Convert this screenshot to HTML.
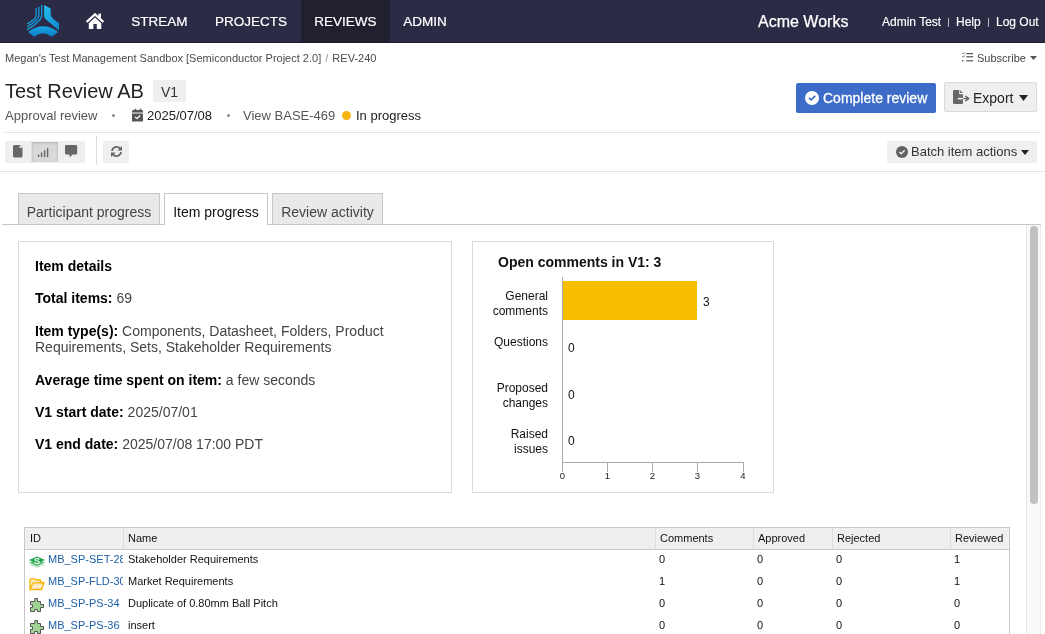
<!DOCTYPE html>
<html><head><meta charset="utf-8">
<style>
*{box-sizing:border-box;margin:0;padding:0}
html{will-change:transform}
html,body{width:1045px;height:634px;overflow:hidden;background:#fff;font-family:"Liberation Sans",sans-serif;color:#222}
.abs{position:absolute;white-space:nowrap}
svg{position:absolute;overflow:visible}
#hdr{position:absolute;left:0;top:0;width:1045px;height:43px;background:#2c2b45;border-bottom:1px solid #1c1b30}
.nav{position:absolute;top:0;height:42px;color:#fff;font-size:13.5px;-webkit-text-stroke:0.2px #fff}
.nav span{position:absolute;top:14px;left:0;right:0;text-align:center}
.act{background:#20202f}
.bc{font-size:11px;color:#4a4a4a}
.sub{font-size:13px;color:#555}
.hr{position:absolute;height:1px;background:#e4e4e4}
.btn{position:absolute;background:#efefef;border-radius:2px}
.tab{position:absolute;top:193px;height:31px;border:1px solid #c6c6c6;border-bottom:none;background:#e9e9e9;font-size:14px;color:#444}
.tab span{position:absolute;top:10px;left:0;right:0;text-align:center}
.tab.on{background:#fff;color:#111;height:32px}
.box{position:absolute;border:1px solid #dadada}
.p{position:absolute;left:35px;font-size:14px;color:#444;white-space:nowrap;line-height:16px}
.p b{color:#000}
.cl{position:absolute;font-size:12px;color:#111;text-align:right;line-height:15px;white-space:nowrap}
.zl{position:absolute;font-size:12px;color:#111}
.tk{position:absolute;font-size:9.5px;color:#222;width:10px;text-align:center}
.ax{position:absolute;background:#a9a9a9}
.td{font-size:11px;color:#111}
table{position:absolute;left:24px;top:527px;border-collapse:collapse;font-size:11px;color:#111;table-layout:fixed;width:986px}
th{background:#efefef;font-weight:normal;text-align:left;height:23px;border-top:1px solid #c8c8c8;border-bottom:1px solid #c8c8c8;border-left:1px solid #dcdcdc;padding-left:5px;padding-top:1px}
th:first-child{border-left:1px solid #c8c8c8}
th:last-child{border-right:1px solid #c8c8c8}
td{height:22px;padding-left:4px;padding-top:1px;white-space:nowrap;overflow:hidden}
td:first-child{border-left:1px solid #c8c8c8;padding-left:4px;position:relative}
td:last-child{border-right:1px solid #c8c8c8}
td a{color:#1d5fa8;text-decoration:none;margin-left:19px}
td svg{left:4px;top:4px}
</style></head><body>
<div id="hdr">
  <svg style="left:24px;top:2px" width="38" height="38" viewBox="0 0 38 38">
    <defs>
      <linearGradient id="g1" x1="0" y1="0" x2="1" y2="1"><stop offset="0" stop-color="#22c0ee"/><stop offset="1" stop-color="#0c86cf"/></linearGradient>
      <linearGradient id="g2" x1="0" y1="0" x2="0" y2="1"><stop offset="0" stop-color="#1aa6e2"/><stop offset="1" stop-color="#0a7cc7"/></linearGradient>
    </defs>
    <path d="M20.1,3 L26.7,6.4 L26.7,12.5 Q27.2,16.5 35,21 L35,28.4 L22,17.6 Q20.1,16 20.1,13.5 Z" fill="url(#g1)"/>
    <path d="M3.9,30 Q19.2,18.5 34.2,30 L27.6,34.8 Q19.2,27.5 10.2,34.8 Z" fill="url(#g2)"/>
    <g fill="none" stroke="url(#g1)" stroke-width="1.35">
      <path d="M17.7,3 L17.7,13.5 Q17.7,19 3.3,27.6"/>
      <path d="M14.9,4.8 L14.9,13.5 Q14.9,17.6 3.3,24.8"/>
      <path d="M12.1,6.3 L12.1,14 Q12.1,16.8 3.3,21.9"/>
    </g>
  </svg>
  <svg style="left:85px;top:12px" width="20" height="18" viewBox="0 0 20 18">
    <path d="M1.6,10 L10,2.3 L18.4,10" fill="none" stroke="#fff" stroke-width="2.3" stroke-linejoin="miter"/>
    <rect x="13.4" y="1.6" width="2.6" height="4" fill="#fff"/>
    <path d="M3.8,11.2 L10,5.6 L16.3,11.2 L16.3,17 L11.8,17 L11.8,12 L8.4,12 L8.4,17 L3.8,17 Z" fill="#fff"/>
  </svg>
  <div class="nav" style="left:121px;width:77px"><span>STREAM</span></div>
  <div class="nav" style="left:206px;width:90px"><span>PROJECTS</span></div>
  <div class="nav act" style="left:301px;width:89px"><span>REVIEWS</span></div>
  <div class="nav" style="left:390px;width:70px"><span>ADMIN</span></div>
  <div class="abs" style="left:758px;top:13px;font-size:16px;color:#fff;-webkit-text-stroke:0.25px #fff">Acme Works</div>
  <div class="abs" style="left:882px;top:15px;font-size:12px;color:#fff;-webkit-text-stroke:0.15px #fff">Admin Test</div>
  <div class="abs" style="left:948px;top:18px;width:1px;height:9px;background:#b9b9c4"></div>
  <div class="abs" style="left:956px;top:15px;font-size:12px;color:#fff;-webkit-text-stroke:0.15px #fff">Help</div>
  <div class="abs" style="left:988px;top:18px;width:1px;height:9px;background:#b9b9c4"></div>
  <div class="abs" style="left:996px;top:15px;font-size:12px;color:#fff;-webkit-text-stroke:0.15px #fff">Log Out</div>
</div>

<div class="abs bc" style="left:5px;top:52px">Megan's Test Management Sandbox [Semiconductor Project 2.0] <span style="color:#999;margin:0 1px">/</span> REV-240</div>
<svg style="left:962px;top:52px" width="12" height="10" viewBox="0 0 12 10">
  <path d="M0.3,1.2 L1.3,2 L3,0.3 M0.3,4.3 L1.3,5.1 L3,3.4" fill="none" stroke="#555" stroke-width="0.9"/>
  <rect x="0" y="8" width="1.4" height="1.4" fill="#555"/>
  <rect x="4.3" y="1" width="6.8" height="1.2" fill="#555"/>
  <rect x="4.3" y="4.2" width="6.8" height="1.2" fill="#555"/>
  <rect x="4.3" y="8.2" width="6.8" height="1.2" fill="#555"/>
</svg>
<div class="abs bc" style="left:977px;top:52px;color:#444">Subscribe</div>
<svg style="left:1030px;top:56px" width="7" height="4" viewBox="0 0 7 4"><path d="M0,0 L7,0 L3.5,4 Z" fill="#555"/></svg>

<div class="abs" style="left:5px;top:80px;font-size:20px;color:#222">Test Review AB</div>
<div class="abs" style="left:153px;top:80px;width:33px;height:22px;background:#efefef;border-radius:2px;font-size:14px;color:#333"><span style="position:absolute;left:0;right:0;top:4px;text-align:center">V1</span></div>

<div class="abs sub" style="left:5px;top:108px">Approval review</div>
<div class="abs" style="left:112px;top:114px;width:3px;height:3px;border-radius:50%;background:#888"></div>
<svg style="left:132px;top:108px" width="11" height="14" viewBox="0 0 11 14">
  <rect x="0" y="2" width="11" height="11.6" rx="1.2" fill="#555"/>
  <rect x="0" y="4.1" width="11" height="1.9" fill="#aaa"/>
  <rect x="2.7" y="0.7" width="1.6" height="2.5" fill="#555"/>
  <rect x="7.7" y="0.7" width="1.6" height="2.5" fill="#555"/>
  <path d="M3,9 L5,10.5 L8.2,7.6" fill="none" stroke="#fff" stroke-width="1.3"/>
</svg>
<div class="abs sub" style="left:147px;top:108px;color:#222">2025/07/08</div>
<div class="abs" style="left:227px;top:114px;width:3px;height:3px;border-radius:50%;background:#888"></div>
<div class="abs sub" style="left:243px;top:108px">View BASE-469</div>
<div class="abs" style="left:342px;top:111px;width:9px;height:9px;border-radius:50%;background:#f6b60f"></div>
<div class="abs sub" style="left:356px;top:108px;color:#222">In progress</div>

<div class="btn" style="left:796px;top:83px;width:140px;height:30px;background:#3d6cc8;border-radius:2px"></div>
<svg style="left:805px;top:91px" width="14" height="14" viewBox="0 0 14 14"><circle cx="7" cy="7" r="7" fill="#fff"/><path d="M4,6.8 L6.2,8.8 L10.2,4.8" fill="none" stroke="#3d6cc8" stroke-width="1.7"/></svg>
<div class="abs" style="left:823px;top:90px;font-size:14px;color:#fff;-webkit-text-stroke:0.3px #fff">Complete review</div>

<div class="btn" style="left:944px;top:82px;width:93px;height:30px;border:1px solid #dadada;border-radius:2px"></div>
<svg style="left:953px;top:90px" width="16" height="14" viewBox="0 0 16 14">
  <path d="M0,1.2 Q0,0 1.2,0 L6.2,0 L6.2,4.2 L10,4.2 L10,12.7 Q10,14 8.8,14 L1.2,14 Q0,14 0,12.7 Z" fill="#666"/>
  <path d="M7.2,0.2 L7.2,3.1 L10,3.1 Z" fill="#666"/>
  <rect x="4.8" y="7.8" width="5.6" height="1.6" fill="#efefef"/>
  <rect x="10.2" y="7.9" width="5" height="1.4" fill="#666"/>
  <path d="M12.4,6 L15.6,8.6 L12.4,11.1" fill="none" stroke="#666" stroke-width="1.5"/>
</svg>
<div class="abs" style="left:973px;top:90px;font-size:14px;color:#222">Export</div>
<svg style="left:1019px;top:95px" width="9" height="6" viewBox="0 0 9 6"><path d="M0,0 L9,0 L4.5,6 Z" fill="#222"/></svg>

<div class="hr" style="left:5px;top:132px;width:1036px"></div>
<div class="btn" style="left:5px;top:141px;width:80px;height:22px"></div>
<div class="abs" style="left:31px;top:141px;width:1px;height:22px;background:#e0e0e0"></div>
<div class="abs" style="left:32px;top:142px;width:26px;height:20px;background:#d9d9d9;box-shadow:inset 0 1px 3px rgba(0,0,0,.18)"></div>
<svg style="left:13px;top:145px" width="10" height="13" viewBox="0 0 10 13">
  <path d="M1.5,0 L6.8,0 L9.5,2.8 L9.5,11 Q9.5,12.5 8,12.5 L1.5,12.5 Q0,12.5 0,11 L0,1.5 Q0,0 1.5,0 Z" fill="#666"/>
  <path d="M6.6,0.3 L6.6,2.9 L9.2,2.9 Z" fill="#efefef"/>
</svg>
<svg style="left:37px;top:147px" width="12" height="11" viewBox="0 0 12 11">
  <rect x="0.9" y="7.5" width="1.4" height="2.6" rx="0.6" fill="#666"/>
  <rect x="3.9" y="5.5" width="1.4" height="4.6" fill="#666"/>
  <rect x="6.9" y="3.3" width="1.4" height="6.8" fill="#666"/>
  <rect x="9.9" y="1" width="1.4" height="9.1" fill="#666"/>
</svg>
<svg style="left:65px;top:145px" width="13" height="13" viewBox="0 0 13 13">
  <path d="M1.3,0 L11,0 Q12.2,0 12.2,1.3 L12.2,8.3 Q12.2,9.6 11,9.6 L7.5,9.6 L4.6,12.4 L4.6,9.6 L1.3,9.6 Q0,9.6 0,8.3 L0,1.3 Q0,0 1.3,0 Z" fill="#666"/>
</svg>
<div class="abs" style="left:96px;top:136px;width:1px;height:29px;background:#dcdcdc"></div>
<div class="btn" style="left:103px;top:141px;width:26px;height:22px"></div>
<svg style="left:110px;top:145px" width="13" height="13" viewBox="0 0 13 13">
  <path d="M2,6 A4.6,4.6 0 0 1 10.1,3.6" fill="none" stroke="#666" stroke-width="1.8"/>
  <path d="M12,1 L12,5.6 L7.4,5.6 Z" fill="#666"/>
  <path d="M11,7 A4.6,4.6 0 0 1 2.9,9.4" fill="none" stroke="#666" stroke-width="1.8"/>
  <path d="M1,12 L1,7.4 L5.6,7.4 Z" fill="#666"/>
</svg>

<div class="btn" style="left:887px;top:141px;width:150px;height:22px"></div>
<svg style="left:896px;top:146px" width="12" height="12" viewBox="0 0 12 12"><circle cx="6" cy="6" r="6" fill="#606060"/><path d="M3.3,6 L5.2,7.8 L8.7,4.3" fill="none" stroke="#efefef" stroke-width="1.4"/></svg>
<div class="abs" style="left:911px;top:144px;font-size:13px;color:#333">Batch item actions</div>
<svg style="left:1020.5px;top:150px" width="8" height="5" viewBox="0 0 8 5"><path d="M0,0 L8,0 L4,5 Z" fill="#222"/></svg>
<div class="hr" style="left:0;top:171px;width:1045px"></div>

<div class="abs" style="left:2px;top:224px;width:1039px;height:1px;background:#c6c6c6"></div>
<div class="tab" style="left:18px;width:142px"><span>Participant progress</span></div>
<div class="tab on" style="left:164px;width:104px"><span>Item progress</span></div>
<div class="tab" style="left:272px;width:111px"><span>Review activity</span></div>

<div class="box" style="left:18px;top:241px;width:434px;height:252px"></div>
<div class="p" style="top:258px"><b>Item details</b></div>
<div class="p" style="top:290px"><b>Total items:</b> 69</div>
<div class="p" style="top:323px"><b>Item type(s):</b> Components, Datasheet, Folders, Product<br>Requirements, Sets, Stakeholder Requirements</div>
<div class="p" style="top:372px"><b>Average time spent on item:</b> a few seconds</div>
<div class="p" style="top:404px"><b>V1 start date:</b> 2025/07/01</div>
<div class="p" style="top:436px"><b>V1 end date:</b> 2025/07/08 17:00 PDT</div>

<div class="box" style="left:472px;top:241px;width:302px;height:252px"></div>
<div class="abs" style="left:498px;top:254px;font-size:14px;font-weight:bold;color:#111">Open comments in V1: 3</div>

<div class="ax" style="left:562px;top:277px;width:1px;height:186px"></div>
<div class="ax" style="left:562px;top:462px;width:182px;height:1px"></div>
<div class="ax" style="left:562px;top:462px;width:1px;height:10px"></div>
<div class="ax" style="left:607px;top:462px;width:1px;height:10px"></div>
<div class="ax" style="left:652px;top:462px;width:1px;height:10px"></div>
<div class="ax" style="left:697px;top:462px;width:1px;height:10px"></div>
<div class="ax" style="left:743px;top:462px;width:1px;height:10px"></div>
<div class="tk" style="left:557.5px;top:470px">0</div>
<div class="tk" style="left:602.5px;top:470px">1</div>
<div class="tk" style="left:647.5px;top:470px">2</div>
<div class="tk" style="left:692.5px;top:470px">3</div>
<div class="tk" style="left:738px;top:470px">4</div>
<div class="abs" style="left:563px;top:281px;width:134px;height:39px;background:#f8be00"></div>
<div class="zl" style="left:703px;top:295px">3</div>
<div class="zl" style="left:568px;top:341px">0</div>
<div class="zl" style="left:568px;top:388px">0</div>
<div class="zl" style="left:568px;top:434px">0</div>
<div class="cl" style="right:497px;top:289px">General<br>comments</div>
<div class="cl" style="right:497px;top:335px">Questions</div>
<div class="cl" style="right:497px;top:381px">Proposed<br>changes</div>
<div class="cl" style="right:497px;top:427px">Raised<br>issues</div>

<div class="abs" style="left:24px;top:527px;width:986px;height:23px;background:#efefef;border:1px solid #c8c8c8"></div>
<div class="abs" style="left:123px;top:528px;width:1px;height:21px;background:#dcdcdc"></div>
<div class="abs" style="left:655px;top:528px;width:1px;height:21px;background:#dcdcdc"></div>
<div class="abs" style="left:753px;top:528px;width:1px;height:21px;background:#dcdcdc"></div>
<div class="abs" style="left:832px;top:528px;width:1px;height:21px;background:#dcdcdc"></div>
<div class="abs" style="left:950px;top:528px;width:1px;height:21px;background:#dcdcdc"></div>
<div class="abs" style="left:24px;top:550px;width:1px;height:84px;background:#c8c8c8"></div>
<div class="abs" style="left:1009px;top:550px;width:1px;height:84px;background:#c8c8c8"></div>
<div class="abs td" style="left:30px;top:532px">ID</div>
<div class="abs td" style="left:128px;top:532px">Name</div>
<div class="abs td" style="left:660px;top:532px">Comments</div>
<div class="abs td" style="left:758px;top:532px">Approved</div>
<div class="abs td" style="left:837px;top:532px">Rejected</div>
<div class="abs td" style="left:955px;top:532px">Reviewed</div>
<svg width="16" height="13" viewBox="0 0 16 13" style="left:29px;top:556px">
  <path d="M0,8.5 L8,5.5 L16,8.5 L8,12 Z" fill="#c4e6cc"/>
  <path d="M0,6.5 L8,3.5 L16,6.5 L8,10 Z" fill="#5cc07a"/>
  <path d="M0,4 L8,0.5 L16,4 L8,7.6 Z" fill="#1fa34a"/>
  <text x="8" y="8.3" font-size="9" font-weight="bold" fill="#fff" text-anchor="middle" font-family="Liberation Sans">S</text>
</svg>
<div class="abs td" style="left:48px;top:553px;width:75px;overflow:hidden;color:#1d5fa8">MB_SP-SET-28</div>
<div class="abs td" style="left:128px;top:553px">Stakeholder Requirements</div>
<div class="abs td" style="left:659px;top:553px">0</div>
<div class="abs td" style="left:757px;top:553px">0</div>
<div class="abs td" style="left:836px;top:553px">0</div>
<div class="abs td" style="left:954px;top:553px">1</div>
<svg width="16" height="13" viewBox="0 0 16 13" style="left:29px;top:578px">
  <path d="M1,11.5 L1,2 Q1,0.8 2,0.8 L6,0.8 L7,2 L11.5,2 L11.5,4.5 L15,4.5 L12.5,11.5 Z" fill="#fdebc4" stroke="#f6b400" stroke-width="1.3" stroke-linejoin="round"/>
  <path d="M1,11.5 L4,4.8 L15,4.8" fill="none" stroke="#f6b400" stroke-width="1.3"/>
</svg>
<div class="abs td" style="left:48px;top:575px;width:75px;overflow:hidden;color:#1d5fa8">MB_SP-FLD-30</div>
<div class="abs td" style="left:128px;top:575px">Market Requirements</div>
<div class="abs td" style="left:659px;top:575px">1</div>
<div class="abs td" style="left:757px;top:575px">0</div>
<div class="abs td" style="left:836px;top:575px">0</div>
<div class="abs td" style="left:954px;top:575px">1</div>
<svg width="14" height="14" viewBox="0 0 14 14" style="left:30px;top:598px">
  <path d="M4.8,0.5 L7.5,0.5 L7.5,3.5 L10.5,3.5 L10.5,6.5 L13.5,6.5 L13.5,9.5 L10.5,9.5 L10.5,13.5 L7.5,13.5 L7.5,11.5 L4.8,11.5 L4.8,13.5 L0.5,13.5 L0.5,9.5 L2.5,9.5 L2.5,6.8 L0.5,6.8 L0.5,3.5 L4.8,3.5 Z" fill="#9fd494" stroke="#555" stroke-width="1"/>
</svg>
<div class="abs td" style="left:48px;top:597px;width:75px;overflow:hidden;color:#1d5fa8">MB_SP-PS-34</div>
<div class="abs td" style="left:128px;top:597px">Duplicate of 0.80mm Ball Pitch</div>
<div class="abs td" style="left:659px;top:597px">0</div>
<div class="abs td" style="left:757px;top:597px">0</div>
<div class="abs td" style="left:836px;top:597px">0</div>
<div class="abs td" style="left:954px;top:597px">0</div>
<svg width="14" height="14" viewBox="0 0 14 14" style="left:30px;top:620px">
  <path d="M4.8,0.5 L7.5,0.5 L7.5,3.5 L10.5,3.5 L10.5,6.5 L13.5,6.5 L13.5,9.5 L10.5,9.5 L10.5,13.5 L7.5,13.5 L7.5,11.5 L4.8,11.5 L4.8,13.5 L0.5,13.5 L0.5,9.5 L2.5,9.5 L2.5,6.8 L0.5,6.8 L0.5,3.5 L4.8,3.5 Z" fill="#9fd494" stroke="#555" stroke-width="1"/>
</svg>
<div class="abs td" style="left:48px;top:619px;width:75px;overflow:hidden;color:#1d5fa8">MB_SP-PS-36</div>
<div class="abs td" style="left:128px;top:619px">insert</div>
<div class="abs td" style="left:659px;top:619px">0</div>
<div class="abs td" style="left:757px;top:619px">0</div>
<div class="abs td" style="left:836px;top:619px">0</div>
<div class="abs td" style="left:954px;top:619px">0</div>

<div class="abs" style="left:1026px;top:225px;width:15px;height:409px;background:#f9f9f9;border-left:1px solid #e8e8e8;border-right:1px solid #ededed"></div>
<div class="abs" style="left:1030px;top:226px;width:8px;height:278px;background:#c1c1c1;border-radius:4px"></div>
</body></html>
